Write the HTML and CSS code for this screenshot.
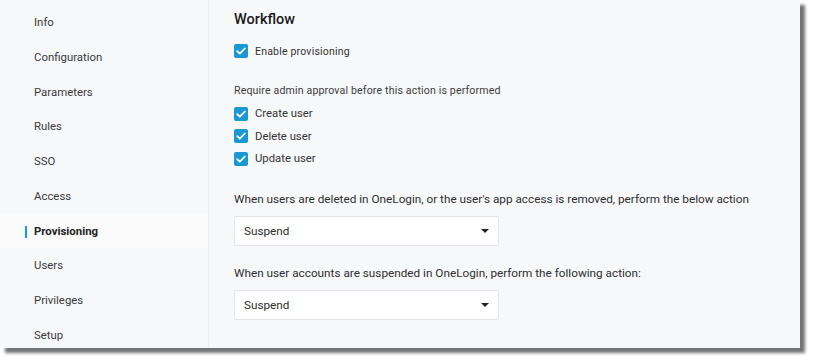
FILE: index.html
```html
<!DOCTYPE html>
<html lang="en">

<head>
  <meta charset="UTF-8">
  <title>Provisioning</title>
  <link rel="stylesheet" href="styles.css">
</head>

<body>
  <div class="frame">
    <div class="sidebar">
      <a href="#">Info</a>
      <a href="#">Configuration</a>
      <a href="#">Parameters</a>
      <a href="#">Rules</a>
      <a href="#">SSO</a>
      <a href="#">Access</a>
      <a href="#" class="active">Provisioning</a>
      <a href="#">Users</a>
      <a href="#">Privileges</a>
      <a href="#">Setup</a>
    </div>

    <div class="main-content">
      <h2>Workflow</h2>

      <label class="check small">
        <span class="box"><svg viewBox="0 0 14 14"><path d="M3.2 7.2l2.6 2.5 5-5.2" /></svg></span>
        Enable provisioning
      </label>

      <p class="hint">Require admin approval before this action is performed</p>
      <div class="check-list">
        <label class="check">
          <span class="box"><svg viewBox="0 0 14 14"><path d="M3.2 7.2l2.6 2.5 5-5.2" /></svg></span>
          Create user
        </label>
        <label class="check">
          <span class="box"><svg viewBox="0 0 14 14"><path d="M3.2 7.2l2.6 2.5 5-5.2" /></svg></span>
          Delete user
        </label>
        <label class="check">
          <span class="box"><svg viewBox="0 0 14 14"><path d="M3.2 7.2l2.6 2.5 5-5.2" /></svg></span>
          Update user
        </label>
      </div>

      <p class="question">When users are deleted in OneLogin, or the user's app access is removed, perform the below action</p>
      <div class="select">
        <span>Suspend</span>
        <span class="caret"></span>
      </div>

      <p class="question">When user accounts are suspended in OneLogin, perform the following action:</p>
      <div class="select">
        <span>Suspend</span>
        <span class="caret"></span>
      </div>
    </div>
  </div>
</body>

</html>
```

FILE: styles.css
```css
* {
  box-sizing: border-box;
  margin: 0;
  padding: 0;
  font-family: Roboto, "Liberation Sans", sans-serif;
}

body {
  background-color: #fff;
  width: 815px;
  height: 364px;
  overflow: hidden;
}

.frame {
  display: flex;
  width: 800px;
  height: 348px;
  background-color: #f7f8fa;
  box-shadow: 5px 5px 3px rgba(0, 0, 0, 0.55);
}

.sidebar {
  width: 209px;
  flex-shrink: 0;
  padding-top: 5px;
  border-right: 1px solid #eceef1;
}

.sidebar a {
  display: block;
  position: relative;
  height: 34.75px;
  line-height: 34.75px;
  padding-left: 34px;
  font-size: 11.4px;
  color: #3a3a3a;
  text-decoration: none;
}

.sidebar a.active {
  background-color: #fbfbfc;
  font-weight: bold;
  color: #222;
}

.sidebar a.active::before {
  content: "";
  position: absolute;
  left: 25px;
  top: 12px;
  width: 2px;
  height: 12px;
  background-color: #1b9ad6;
}

.main-content {
  flex-grow: 1;
  padding: 11px 0 0 25px;
  color: #3c3c3c;
}

.main-content h2 {
  font-size: 14.5px;
  font-weight: 500;
  color: #1a1a1a;
  line-height: 18px;
  margin-bottom: 11px;
}

.check {
  display: flex;
  align-items: center;
  gap: 7px;
  font-size: 11.3px;
  height: 22.5px;
  color: #333;
}

.check.small {
  font-size: 10.5px;
  letter-spacing: 0.2px;
}

.box {
  width: 14px;
  height: 14px;
  border-radius: 2px;
  background-color: #1a98d3;
  display: flex;
}

.box svg {
  width: 14px;
  height: 14px;
  fill: none;
  stroke: #fff;
  stroke-width: 1.8;
  stroke-linecap: round;
  stroke-linejoin: round;
}

.hint {
  font-size: 10.6px;
  letter-spacing: 0.15px;
  margin-top: 21px;
  line-height: 14px;
  margin-bottom: 5px;
  color: #3c3c3c;
}

.question {
  font-size: 11.75px;
  line-height: 14px;
  margin-top: 22px;
  margin-bottom: 10px;
  color: #2e2e2e;
}

.select + .question {
  margin-top: 20px;
}

.select {
  width: 265px;
  height: 30px;
  background-color: #fff;
  border: 1px solid #e4e6e9;
  border-radius: 2px;
  display: flex;
  align-items: center;
  justify-content: space-between;
  padding: 0 9px 0 9px;
  font-size: 11.75px;
  color: #2e2e2e;
}

.caret {
  width: 0;
  height: 0;
  border-left: 4px solid transparent;
  border-right: 4px solid transparent;
  border-top: 4px solid #222;
}
```
